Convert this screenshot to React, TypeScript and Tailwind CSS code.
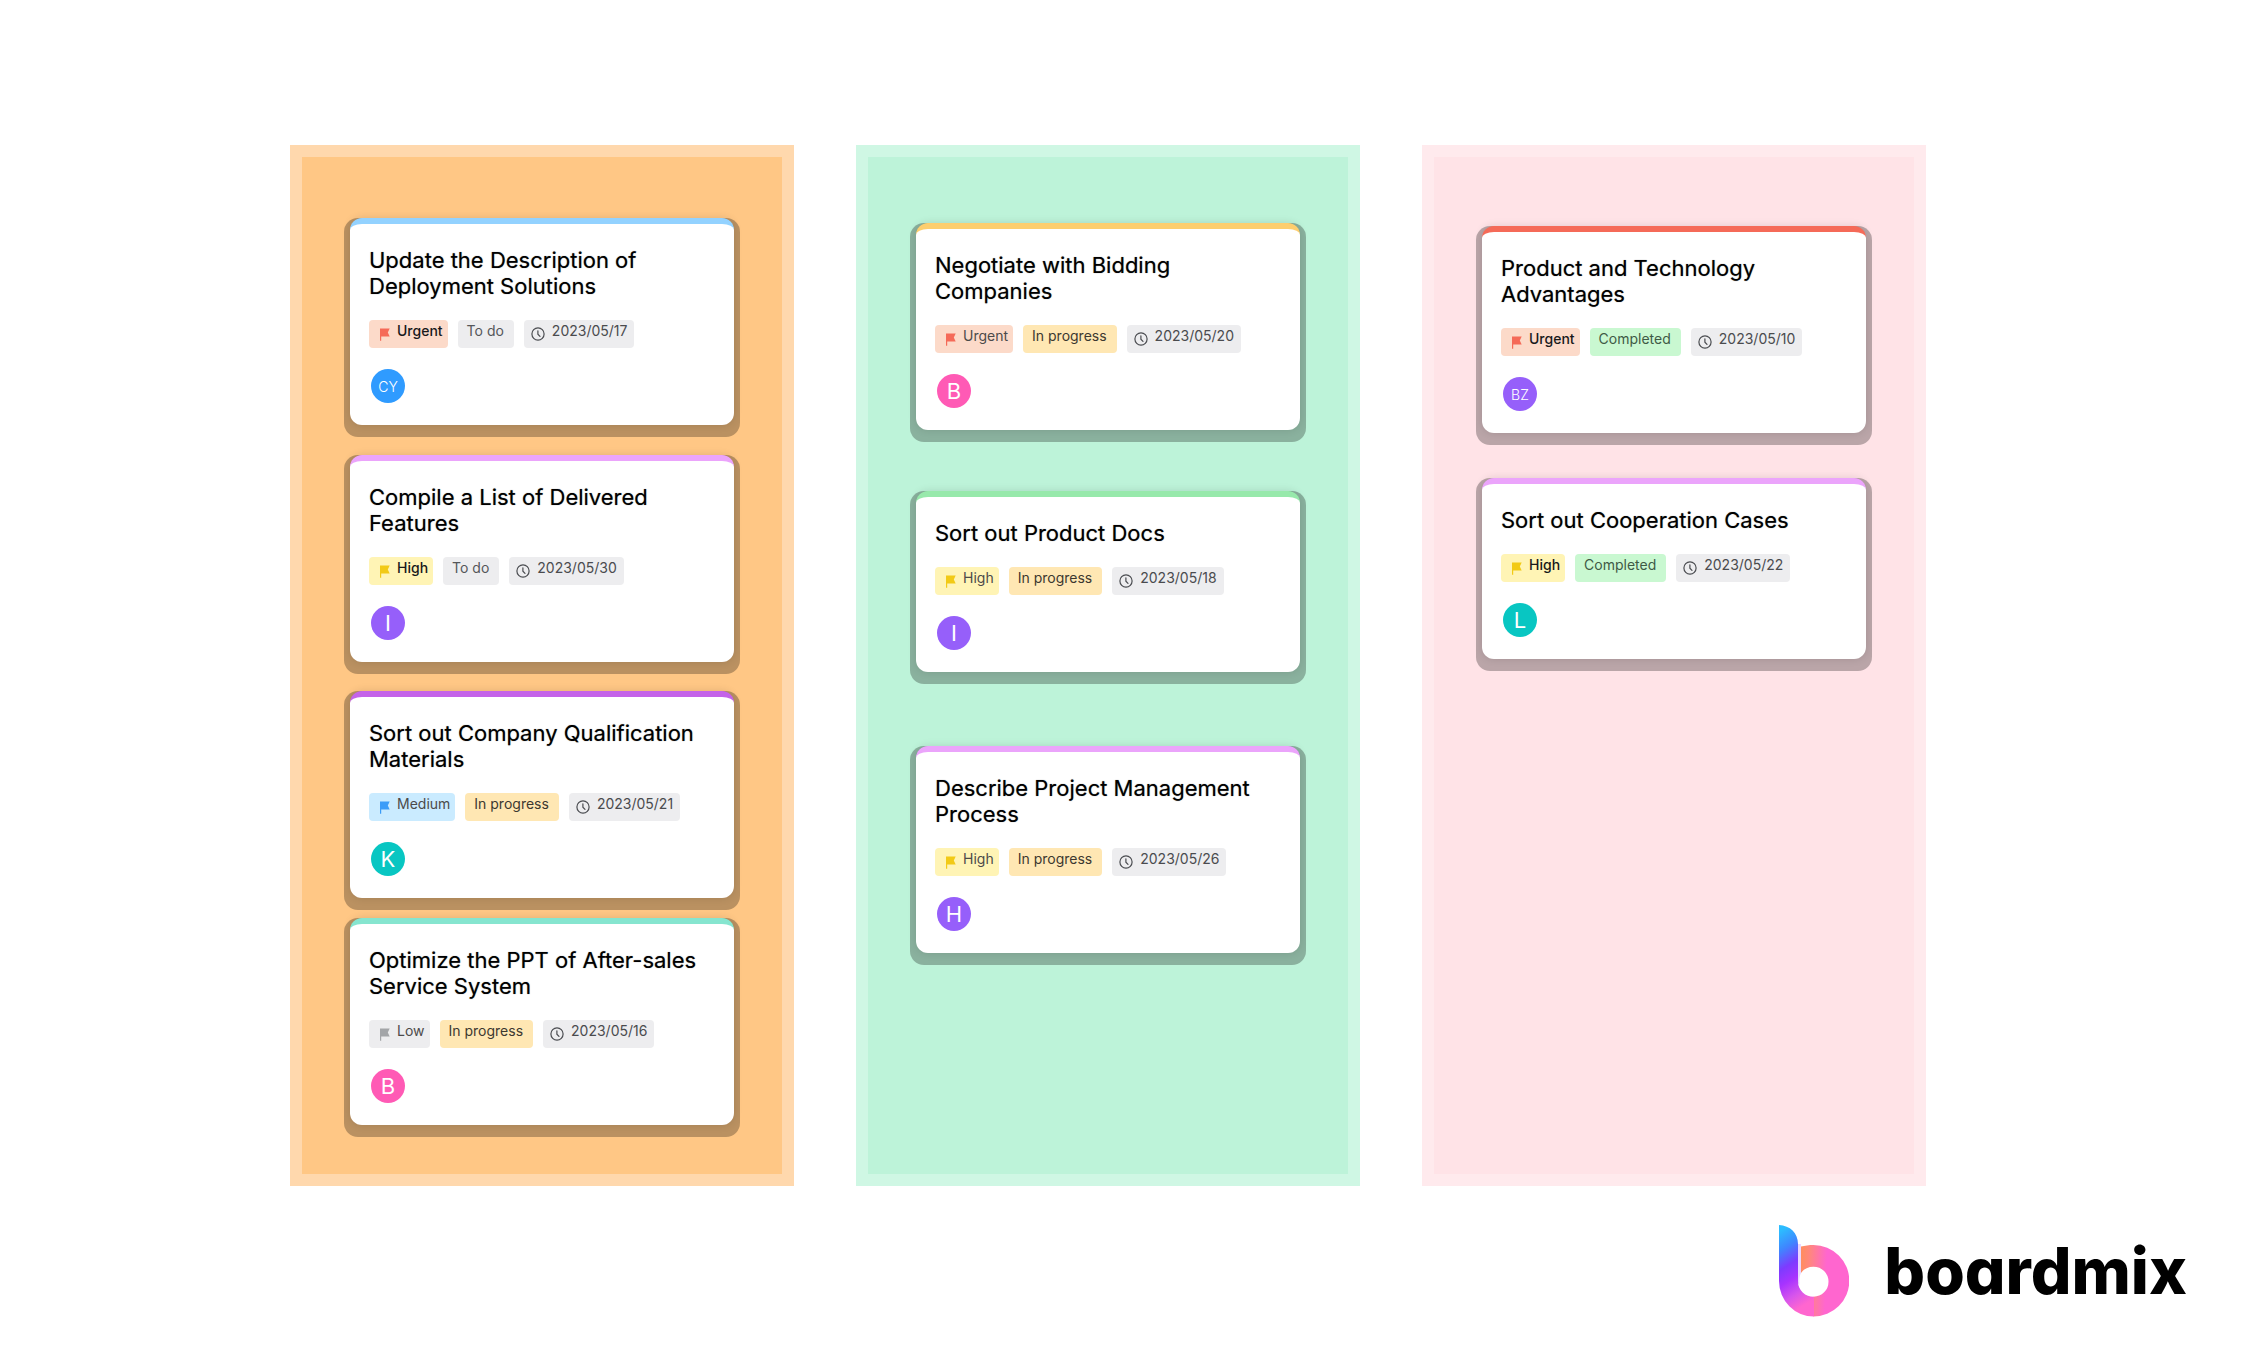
import React from "react";

type Priority = "Urgent" | "High" | "Medium" | "Low";
type Status = "To do" | "In progress" | "Completed";

interface Task {
  title: string;
  priority: Priority;
  strong?: boolean;
  status: Status;
  date: string;
  initials: string;
  accent: string;
  avatar: string;
  gap: string;
}

interface Column {
  name: string;
  panel: string;
  tasks: Task[];
}

const PRIORITY_STYLE: Record<Priority, string> = {
  Urgent: "bg-[#fcdac9]",
  High: "bg-[#fff4b5]",
  Medium: "bg-[#caebff]",
  Low: "bg-[#ededef]",
};

const FLAG_STYLE: Record<Priority, string> = {
  Urgent: "text-[#f56a58]",
  High: "text-[#f2ca16]",
  Medium: "text-[#3b9cf8]",
  Low: "text-[#a3a5a8]",
};

const STATUS_STYLE: Record<Status, string> = {
  "To do": "bg-[#ededef] text-[#55575a]",
  "In progress": "bg-[#ffe7b3] text-[#3c3830]",
  Completed: "bg-[#c9f8d1] text-[#3f5a46]",
};

const COLUMNS: Column[] = [
  {
    name: "Preparation",
    panel: "border-[#ffd8ad] bg-[#ffc785] pt-[61px] pb-[37px]",
    tasks: [
      { title: "Update the Description of Deployment Solutions", priority: "Urgent", strong: true, status: "To do", date: "2023/05/17", initials: "CY", accent: "border-[#93d2ff]", avatar: "bg-[#2f9bff]", gap: "mt-0" },
      { title: "Compile a List of Delivered Features", priority: "High", strong: true, status: "To do", date: "2023/05/30", initials: "I", accent: "border-[#eba4fb]", avatar: "bg-[#965ffa]", gap: "mt-[18px]" },
      { title: "Sort out Company Qualification Materials", priority: "Medium", status: "In progress", date: "2023/05/21", initials: "K", accent: "border-[#c463e9]", avatar: "bg-[#08c6c2]", gap: "mt-[17px]" },
      { title: "Optimize the PPT of After-sales Service System", priority: "Low", status: "In progress", date: "2023/05/16", initials: "B", accent: "border-[#86e5cf]", avatar: "bg-[#ff5ab5]", gap: "mt-2" },
    ],
  },
  {
    name: "Execution",
    panel: "border-[#cff7e4] bg-[#bdf3d9] pt-[66px] pb-[37px]",
    tasks: [
      { title: "Negotiate with Bidding Companies", priority: "Urgent", status: "In progress", date: "2023/05/20", initials: "B", accent: "border-[#fdce6e]", avatar: "bg-[#ff5ab5]", gap: "mt-0" },
      { title: "Sort out Product Docs", priority: "High", status: "In progress", date: "2023/05/18", initials: "I", accent: "border-[#97e9ab]", avatar: "bg-[#965ffa]", gap: "mt-[49px]" },
      { title: "Describe Project Management Process", priority: "High", status: "In progress", date: "2023/05/26", initials: "H", accent: "border-[#eba4fb]", avatar: "bg-[#965ffa]", gap: "mt-[62px]" },
    ],
  },
  {
    name: "Delivery",
    panel: "border-[#ffeaed] bg-[#ffe3e7] pt-[69px] pb-[37px]",
    tasks: [
      { title: "Product and Technology Advantages", priority: "Urgent", strong: true, status: "Completed", date: "2023/05/10", initials: "BZ", accent: "border-[#f56a58]", avatar: "bg-[#965ffa]", gap: "mt-0" },
      { title: "Sort out Cooperation Cases", priority: "High", strong: true, status: "Completed", date: "2023/05/22", initials: "L", accent: "border-[#eba4fb]", avatar: "bg-[#08c6c2]", gap: "mt-[33px]" },
    ],
  },
];

function FlagIcon({ className }: { className: string }) {
  return (
    <svg viewBox="0 0 10 13" className={`h-[13px] w-[10px] shrink-0 ${className}`} fill="currentColor" aria-hidden="true">
      <path d="M0 0.5H9.7L7.8 4.4L9.7 8.4H1.2V12.8H0Z" />
    </svg>
  );
}

function ClockIcon() {
  return (
    <svg viewBox="0 0 14 14" className="size-[14px] shrink-0 text-[#4a4c50]" fill="none" stroke="currentColor" strokeWidth="1.2" strokeLinecap="round" aria-hidden="true">
      <circle cx="7" cy="7" r="6.1" />
      <path d="M6.9 3.8V7.2L9 9.4" />
    </svg>
  );
}

function TaskCard({ task }: { task: Task }) {
  return (
    <li className={`rounded-[14px] bg-black/27 px-[6px] pb-3 ${task.gap}`}>
      <article className={`rounded-xl border-t-[6px] bg-white pt-[23px] pr-4 pb-[22px] pl-[19px] shadow-[0_0_8px_rgba(0,0,0,0.12)] ${task.accent}`}>
        <h2 className="max-w-[330px] text-[22px] leading-[26px] font-normal text-black [text-shadow:0_0_1px_#00000080]">{task.title}</h2>
        <div className="mt-[21px] flex gap-[10px] text-[14px] leading-[22px] whitespace-nowrap">
          <span className={`flex h-7 items-start gap-[7px] rounded pr-[5px] pl-[11px] ${PRIORITY_STYLE[task.priority]}`}>
            <span className="flex h-7 items-center">
              <FlagIcon className={FLAG_STYLE[task.priority]} />
            </span>
            <span className={task.strong ? "font-medium text-[#18191b]" : "text-[#4c4a4a]"}>{task.priority}</span>
          </span>
          <span className={`h-7 rounded pr-[10px] pl-[9px] ${STATUS_STYLE[task.status]}`}>{task.status}</span>
          <span className="flex h-7 items-start gap-[7px] rounded bg-[#ededef] pr-[7px] pl-[7px]">
            <span className="flex h-7 items-center">
              <ClockIcon />
            </span>
            <time className="text-[#4a4b4e]">{task.date}</time>
          </span>
        </div>
        <div
          className={`mt-[21px] ml-[2px] flex size-[34px] items-center justify-center rounded-full text-white ${task.avatar} ${
            task.initials.length > 1 ? "text-[14px] font-light" : "text-[22px]"
          }`}
        >
          {task.initials}
        </div>
      </article>
    </li>
  );
}

function LogoMark() {
  return (
    <svg viewBox="0 0 70 92" className="h-[92px] w-[70px]" aria-hidden="true">
      <defs>
        <linearGradient id="stem" gradientUnits="userSpaceOnUse" x1="-2" y1="8" x2="38" y2="72">
          <stop offset="0" stopColor="#2cbcff" />
          <stop offset="0.22" stopColor="#3f86ff" />
          <stop offset="0.44" stopColor="#7d3bff" />
          <stop offset="0.62" stopColor="#a733ff" />
          <stop offset="0.82" stopColor="#d655ec" />
          <stop offset="1" stopColor="#ff66cf" />
        </linearGradient>
        <linearGradient id="bowl" gradientUnits="userSpaceOnUse" x1="22" y1="30" x2="48" y2="31">
          <stop offset="0" stopColor="#ff8d5e" />
          <stop offset="0.35" stopColor="#ff8680" />
          <stop offset="1" stopColor="#ff66cf" />
        </linearGradient>
      </defs>
      <path fill="#ead6ff" d="M19 19H22V48C20.500 51 20 55 20.500 60L19 58Z" />
      <path fill="url(#bowl)" d="M22 21.6C26 20.5 30 20 34.5 20A35.8 35.8 0 0 1 34.5 91.6V71.7A15 15 0 0 0 34.5 41.7C29 41.7 24.5 44 22 48Z" />
      <path fill="url(#stem)" d="M0 0C11 0.500 19 8 19 19V56.500A15.500 15.200 0 0 0 35 71.700V91.600A35 35.800 0 0 1 0 56Z" />
    </svg>
  );
}

export default function App() {
  return (
    <div className="min-h-screen bg-white font-['Inter',sans-serif]">
      <main className="grid grid-cols-3 gap-[62px] pt-[145px] pr-[323px] pl-[290px]">
        {COLUMNS.map((column) => (
          <section key={column.name} aria-label={column.name} className={`border-12 px-[42px] ${column.panel}`}>
            <ul>
              {column.tasks.map((task) => (
                <TaskCard key={task.title} task={task} />
              ))}
            </ul>
          </section>
        ))}
      </main>
      <footer className="mt-[39px] flex items-start justify-end gap-[35px] pr-[62px]">
        <LogoMark />
        <span className="text-[64px] leading-[92px] font-extrabold text-black [font-feature-settings:'cv11']">boardmix</span>
      </footer>
    </div>
  );
}
